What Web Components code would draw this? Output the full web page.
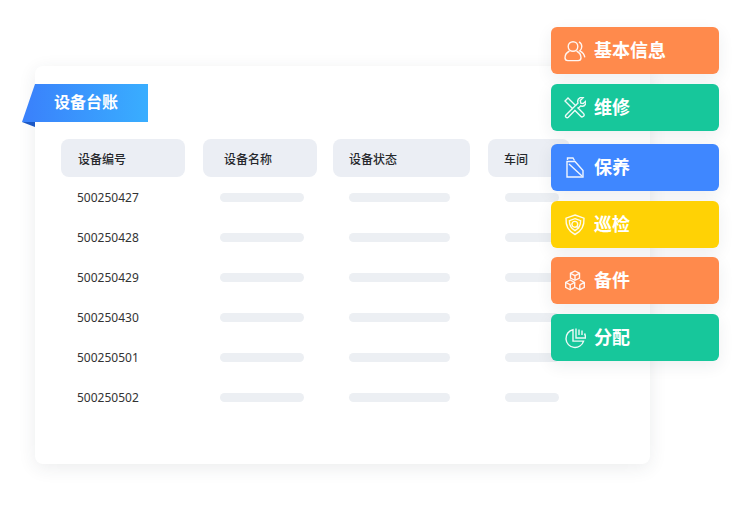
<!DOCTYPE html>
<html>
  <head>
    <meta charset="UTF-8" />
    <title>设备台账</title>
    <style>
      html, body { margin: 0; background: #fff; }
      body { font-family: "Noto Sans", "Noto Sans CJK SC", sans-serif; }
    </style>
    <script>
      const ICONS = {
        user: `<circle cx="9" cy="6.500" r="4.800"/><path d="M5.500 11C2.500 12.500 1 15.200 1 17.800c0 1.800 1 2.800 2.800 2.800h10.400c1.800 0 2.800-1 2.800-2.800 0-2.600-1.500-5.300-4.500-6.800"/><path d="M15 1.800c1.800 1 2.800 2.800 2.800 4.800 0 1.800-.8 3.200-2 4.200 3 1.500 4.700 3.800 5 6.500"/>`,
        tools: `<path d="M1 4l3-3 7.500 7.500-3 3z"/><path d="M13.500 10.500l6 6c.9.9.9 2 0 2.800s-2 .9-2.800 0l-6-6"/><path d="M8.500 11.500l-6.500 6.500c-.8.9-.7 1.700 0 2.300s1.500.7 2.300 0l7-7.300"/><path d="M11.500 8.500l2.500-2.500c-.8-2.400.2-4.500 2.300-5.400 1-.4 2-.4 3 0l-3 3 .5 2.500 2.500.5 2.700-2.700c.3 1.200.2 2.200-.4 3.200-1 1.800-3 2.600-4.800 1.700l-2.800 2.700"/>`,
        doc: `<path d="M3 4.500H11L19 13.500V20H3z"/><path d="M3.500 3V1H9L10.500 3.500"/><path d="M5 7L18 19"/>`,
        shield: `<path d="M11 1l9 3.200c.4 6.800-1.800 12.700-9 16.300-7.200-3.600-9.400-9.500-9-16.300z"/><path d="M11 4.700l5.600 2c.1 4-1.300 7.500-5.600 10-4.300-2.500-5.700-6-5.600-10z"/><circle cx="10.800" cy="10.300" r="2.900"/><path d="M13 12.500l2 2"/>`,
        cubes: `<path d="M11 1l4.500 2.300v4.700l-4.500 2.300-4.500-2.300v-4.700z"/><path d="M6.500 3.300l4.500 2.400 4.500-2.400M11 5.700v4.600"/><path d="M6.200 10l4.500 2.400v5l-4.500 2.400-4.500-2.400v-5z"/><path d="M1.700 12.400l4.500 2.400 4.500-2.400M6.200 14.800v5"/><path d="M15.800 10l4.500 2.400v5l-4.500 2.400-4.500-2.400M15.800 14.800v5M20.300 12.400l-4.500 2.400"/>`,
        pie: `<path d="M9 2.700a9 9 0 1 0 10.600 11.400h-10.600z"/><path d="M12 1.500v9.500h9.500c0-2.200-.3-3.400-1-4.500"/><path d="M15 2.500v5.500M18 3.500v4.500"/>`
      };

      class AppPage extends HTMLElement {
        constructor() {
          super();
          const shadowRoot = this.attachShadow({ mode: "open" });
          shadowRoot.innerHTML = `
          <style>
            :host {
              display: block;
              position: relative;
              width: 750px;
              height: 510px;
              overflow: hidden;
              box-sizing: border-box;
              padding: 66px 0 0 35px;
              background: #fff;
            }
            .menu {
              position: absolute;
              left: 551px;
              top: 27px;
            }
          </style>
          <slot></slot>
          <div class="menu"><slot name="menu"></slot></div>
        `;
        }
      }

      class LedgerCard extends HTMLElement {
        constructor() {
          super();
          const shadowRoot = this.attachShadow({ mode: "open" });
          shadowRoot.innerHTML = `
          <style>
            :host {
              display: block;
              width: 615px;
              height: 398px;
              box-sizing: border-box;
              padding-top: 18px;
              background: #fff;
              border-radius: 8px;
              box-shadow: 0 4px 18px rgba(40, 50, 70, 0.09);
            }
            .ribbon {
              position: relative;
              width: 126px;
              height: 38px;
              margin-left: -13px;
              box-sizing: border-box;
              padding-left: 32px;
              line-height: 37px;
              font-size: 16px;
              font-weight: 700;
              color: #fff;
            }
            .ribbon svg {
              position: absolute;
              left: 0;
              top: 0;
            }
            .ribbon span { position: relative; }
            .table {
              display: grid;
              grid-template-columns: 142px 130px 155px 82px;
              margin: 17px 0 0 26px;
            }
          </style>
          <div class="ribbon">
            <svg width="126" height="44" viewBox="0 0 126 44">
              <defs>
                <linearGradient id="rb" x1="0" x2="1" y1="0" y2="0">
                  <stop offset="0" stop-color="#3a80fb" />
                  <stop offset="1" stop-color="#39aeff" />
                </linearGradient>
              </defs>
              <path d="M13 0H126V38H0z" fill="url(#rb)" />
              <path d="M0 38H13V43z" fill="#1c58c4" />
            </svg>
            <span>设备台账</span>
          </div>
          <div class="table"><slot></slot></div>
        `;
        }
      }

      class HeadCell extends HTMLElement {
        constructor() {
          super();
          const shadowRoot = this.attachShadow({ mode: "open" });
          shadowRoot.innerHTML = `
          <style>
            :host {
              display: block;
              height: 38px;
              box-sizing: border-box;
              background: #ebeef4;
              border-radius: 8px;
              line-height: 41px;
              font-size: 12px;
              font-weight: 500;
              color: #26282c;
            }
          </style>
          <slot></slot>
        `;
        }
        connectedCallback() {
          this.style.width = this.getAttribute("w") + "px";
          this.style.paddingLeft = this.getAttribute("pad") + "px";
        }
      }

      class NumCell extends HTMLElement {
        constructor() {
          super();
          const shadowRoot = this.attachShadow({ mode: "open" });
          shadowRoot.innerHTML = `
          <style>
            :host {
              display: block;
              height: 40px;
              padding-left: 16px;
              line-height: 41px;
              font-size: 12px;
              color: #333;
            }
          </style>
          <slot></slot>
        `;
        }
      }

      class BarCell extends HTMLElement {
        constructor() {
          super();
          const shadowRoot = this.attachShadow({ mode: "open" });
          shadowRoot.innerHTML = `
          <style>
            :host {
              display: flex;
              align-items: center;
              height: 40px;
            }
            i {
              display: block;
              height: 9px;
              border-radius: 5px;
              background: #eceff3;
            }
          </style>
          <i></i>
        `;
        }
        connectedCallback() {
          const bar = this.shadowRoot.querySelector("i");
          bar.style.width = this.getAttribute("w") + "px";
          bar.style.marginLeft = this.getAttribute("off") + "px";
        }
      }

      class MenuButton extends HTMLElement {
        constructor() {
          super();
          const shadowRoot = this.attachShadow({ mode: "open" });
          shadowRoot.innerHTML = `
          <style>
            :host {
              display: flex;
              align-items: center;
              width: 168px;
              height: 47px;
              box-sizing: border-box;
              padding-left: 13px;
              border-radius: 6px;
              color: #fff;
              font-size: 18px;
              font-weight: 700;
              box-shadow: 0 5px 16px rgba(40, 50, 70, 0.08);
            }
            svg {
              flex: none;
              margin-right: 8px;
              fill: none;
              stroke: #fff;
              stroke-width: 1.4;
              opacity: 0.92;
            }
            span { margin-bottom: 4px; }
          </style>
          <svg width="22" height="22" viewBox="0 0 22 22"></svg>
          <span><slot></slot></span>
        `;
        }
        connectedCallback() {
          this.shadowRoot.querySelector("svg").innerHTML = ICONS[this.getAttribute("icon")];
          this.style.background = this.getAttribute("color");
          this.style.marginTop = (this.getAttribute("gap") || 0) + "px";
        }
      }

      customElements.define("app-page", AppPage);
      customElements.define("ledger-card", LedgerCard);
      customElements.define("head-cell", HeadCell);
      customElements.define("num-cell", NumCell);
      customElements.define("bar-cell", BarCell);
      customElements.define("menu-button", MenuButton);
    </script>
  </head>
  <body>
    <app-page>
      <ledger-card>
        <head-cell w="124" pad="17">设备编号</head-cell>
        <head-cell w="114" pad="21">设备名称</head-cell>
        <head-cell w="137" pad="16">设备状态</head-cell>
        <head-cell w="82" pad="16">车间</head-cell>

        <num-cell>500250427</num-cell><bar-cell off="17" w="84"></bar-cell><bar-cell off="16" w="101"></bar-cell><bar-cell off="17" w="54"></bar-cell>
        <num-cell>500250428</num-cell><bar-cell off="17" w="84"></bar-cell><bar-cell off="16" w="101"></bar-cell><bar-cell off="17" w="54"></bar-cell>
        <num-cell>500250429</num-cell><bar-cell off="17" w="84"></bar-cell><bar-cell off="16" w="101"></bar-cell><bar-cell off="17" w="54"></bar-cell>
        <num-cell>500250430</num-cell><bar-cell off="17" w="84"></bar-cell><bar-cell off="16" w="101"></bar-cell><bar-cell off="17" w="54"></bar-cell>
        <num-cell>500250501</num-cell><bar-cell off="17" w="84"></bar-cell><bar-cell off="16" w="101"></bar-cell><bar-cell off="17" w="54"></bar-cell>
        <num-cell>500250502</num-cell><bar-cell off="17" w="84"></bar-cell><bar-cell off="16" w="101"></bar-cell><bar-cell off="17" w="54"></bar-cell>
      </ledger-card>

      <menu-button slot="menu" icon="user" color="#ff8a4c">基本信息</menu-button>
      <menu-button slot="menu" icon="tools" color="#17c79b" gap="10">维修</menu-button>
      <menu-button slot="menu" icon="doc" color="#3f87ff" gap="13">保养</menu-button>
      <menu-button slot="menu" icon="shield" color="#ffd205" gap="10">巡检</menu-button>
      <menu-button slot="menu" icon="cubes" color="#ff8a4c" gap="9">备件</menu-button>
      <menu-button slot="menu" icon="pie" color="#17c79b" gap="10">分配</menu-button>
    </app-page>
  </body>
</html>
